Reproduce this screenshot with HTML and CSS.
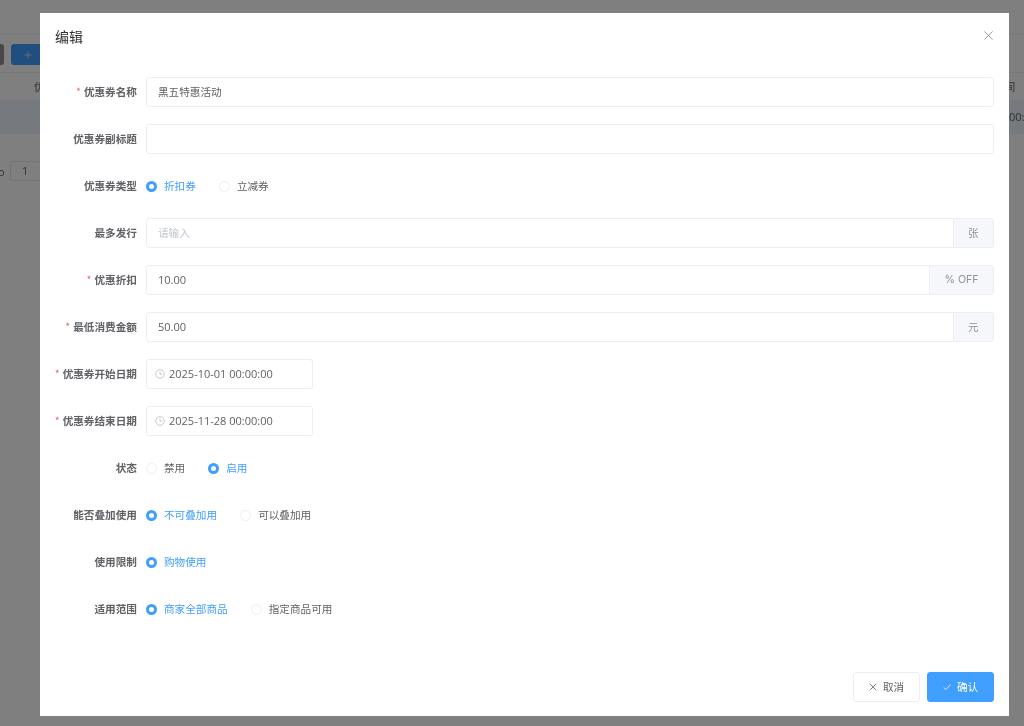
FILE: index.html
```html
<!DOCTYPE html>
<html lang="zh">
<head>
<meta charset="utf-8">
<title>编辑</title>
<link rel="stylesheet" href="styles.css">
</head>
<body>
<div class="page">
  <div class="topline"></div>
  <div class="toolbar">
    <span class="tool-btn dark"></span>
    <span class="tool-btn primary"><svg class="plus" viewBox="0 0 10 10"><path d="M5 .5v9M.5 5h9"/></svg></span>
  </div>
  <div class="thead"><span>优</span><span class="thead-end">间</span></div>
  <div class="trow"><span></span><span class="trow-end num">00:00</span></div>
  <div class="pager"><span class="num">to</span><span class="pager-input num">1</span></div>
</div>
<div class="overlay">
  <div class="dialog">
    <header class="dialog-header">
      <h2 class="dialog-title">编辑</h2>
      <svg class="close" viewBox="0 0 10 10"><path d="M.5.5l9 9M9.5.5l-9 9"/></svg>
    </header>
    <form class="form">
      <div class="row"><label class="label req">优惠券名称</label><div class="input"><span class="val">黑五特惠活动</span></div></div>
      <div class="row"><label class="label">优惠券副标题</label><div class="input"></div></div>
      <div class="row"><label class="label">优惠券类型</label><div class="radios">
        <span class="radio on"><i></i>折扣券</span><span class="radio"><i></i>立减券</span></div></div>
      <div class="row"><label class="label">最多发行</label><div class="input"><span class="ph">请输入</span><span class="append">张</span></div></div>
      <div class="row"><label class="label req">优惠折扣</label><div class="input"><span class="val num">10.00</span><span class="append unit">% OFF</span></div></div>
      <div class="row"><label class="label req">最低消费金额</label><div class="input"><span class="val num">50.00</span><span class="append">元</span></div></div>
      <div class="row"><label class="label req">优惠券开始日期</label><div class="input date"><svg class="clock" viewBox="0 0 10 10"><circle cx="5" cy="5" r="4.3"/><path d="M5 2.4V5.2H7.2"/></svg><span class="val num">2025-10-01 00:00:00</span></div></div>
      <div class="row"><label class="label req">优惠券结束日期</label><div class="input date"><svg class="clock" viewBox="0 0 10 10"><circle cx="5" cy="5" r="4.3"/><path d="M5 2.4V5.2H7.2"/></svg><span class="val num">2025-11-28 00:00:00</span></div></div>
      <div class="row"><label class="label">状态</label><div class="radios">
        <span class="radio"><i></i>禁用</span><span class="radio on"><i></i>启用</span></div></div>
      <div class="row"><label class="label">能否叠加使用</label><div class="radios">
        <span class="radio on"><i></i>不可叠加用</span><span class="radio"><i></i>可以叠加用</span></div></div>
      <div class="row"><label class="label">使用限制</label><div class="radios">
        <span class="radio on"><i></i>购物使用</span></div></div>
      <div class="row"><label class="label">适用范围</label><div class="radios">
        <span class="radio on"><i></i>商家全部商品</span><span class="radio"><i></i>指定商品可用</span></div></div>
    </form>
    <footer class="dialog-footer">
      <button type="button" class="btn"><svg viewBox="0 0 10 10"><path d="M1 1l8 8M9 1l-8 8"/></svg>取消</button>
      <button type="button" class="btn confirm"><svg viewBox="0 0 10 10"><path d="M.8 5.4l2.8 2.8L9.4 2"/></svg>确认</button>
    </footer>
  </div>
</div>
</body>
</html>
```
FILE: styles.css
```css
* { box-sizing: border-box; }
html, body { margin: 0; height: 100%; overflow: hidden; }
body {
  font-family: "Noto Sans CJK SC", "Open Sans", "Liberation Sans", sans-serif;
  font-size: 10.64px;
  color: #606266;
  background: #fff;
}
.page, .overlay { filter: blur(.55px); }
.num { font-family: "Open Sans", "Liberation Sans", sans-serif; font-size: 11px; }
.unit { font-family: "Inter", "Liberation Sans", sans-serif; }
.page { height: 726px; }
.topline { height: 35px; border-bottom: 1px solid #f2f2f2; }
.toolbar { display: flex; gap: 7px; padding-top: 9px; margin-left: -26px; height: 38px; border-bottom: 1px solid #f0f0f0; }
.tool-btn { width: 30px; height: 21px; border-radius: 3px; }
.tool-btn.dark { background: #909090; }
.tool-btn.primary { width: 60px; background: #409eff; display: flex; align-items: center; padding-left: 13px; }
.plus { width: 8px; height: 8px; fill: none; stroke: #fff; stroke-width: 1; opacity: .8; }
.thead { display: flex; justify-content: space-between; height: 27px; padding: 6px 0 0 34px; font-weight: 700; color: #909399; }
.thead-end { margin-right: 9px; }
.trow { display: flex; justify-content: space-between; height: 34px; background: #ecf5ff; padding-top: 9px; white-space: nowrap; }
.trow-end { margin-right: -13px; }
.pager { display: flex; align-items: center; gap: 5px; margin: 27px 0 0 -6px; }
.pager-input { width: 31px; height: 20px; border: 1px solid #e4e7ed; border-radius: 3px; text-align: center; line-height: 18px; }
.overlay { position: fixed; inset: 0; background: rgba(0, 0, 0, .5); }
.dialog {
  position: absolute; left: 40px; top: 13px; width: 969px; height: 703px;
  background: #fff; display: flex; flex-direction: column;
}
.dialog-header { display: flex; justify-content: space-between; align-items: flex-start; height: 64px; padding: 13px 16px 0 15px; }
.dialog-title { margin: 0; font-size: 14px; line-height: 20px; font-weight: 400; color: #303133; }
.close { width: 9px; height: 9px; margin-top: 5px; fill: none; stroke: #909399; stroke-width: 1; }
.form { display: flex; flex-direction: column; gap: 17px; flex: 1; padding-right: 15px; }
.row { display: flex; height: 30px; align-items: center; }
.label { width: 106px; padding: 0 9px 2px 0; flex: none; text-align: right; font-weight: 700; white-space: nowrap; }
.req::before { content: "*"; color: #f56c6c; margin-right: 3px; font-weight: 400; }
.input { flex: 1; height: 30px; display: flex; align-items: center; border: 1px solid #ebeef5; border-radius: 3px; padding-left: 11px; background: #fff; overflow: hidden; }
.val { flex: 1; padding-bottom: 2px; }
.ph { color: #c0c4cc; flex: 1; padding-bottom: 1px; }
.append { align-self: stretch; display: flex; align-items: center; padding: 0 14.4px 1px; background: #f5f7fa; border-left: 1px solid #ebeef5; color: #909399; }
.date { flex: none; width: 167px; padding-left: 8px; }
.clock { width: 10px; height: 10px; margin-right: 4px; flex: none; fill: none; stroke: #b8bcc6; stroke-width: .8; }
.radios { display: flex; gap: 23px; }
.radio { display: flex; align-items: center; gap: 7px; padding-bottom: 2px; }
.radio i { width: 11px; height: 11px; margin-bottom: -2px; border-radius: 50%; border: 1px solid #ebeef5; background: #fff; }
.radio.on { color: #409eff; }
.radio.on i { border: 3.5px solid #409eff; }
.dialog-footer { display: flex; justify-content: flex-end; gap: 7px; padding: 0 15px 14px; }
.btn { display: flex; align-items: center; justify-content: center; gap: 6px; width: 67px; height: 30px; padding: 0 0 2px; background: #fff; border: 1px solid #ebeef5; border-radius: 3px; color: #606266; font: inherit; }
.btn svg { width: 8px; height: 8px; margin-bottom: -2px; fill: none; stroke: currentColor; stroke-width: 1; }
.confirm { background: #409eff; border-color: #409eff; color: #fff; }
```
